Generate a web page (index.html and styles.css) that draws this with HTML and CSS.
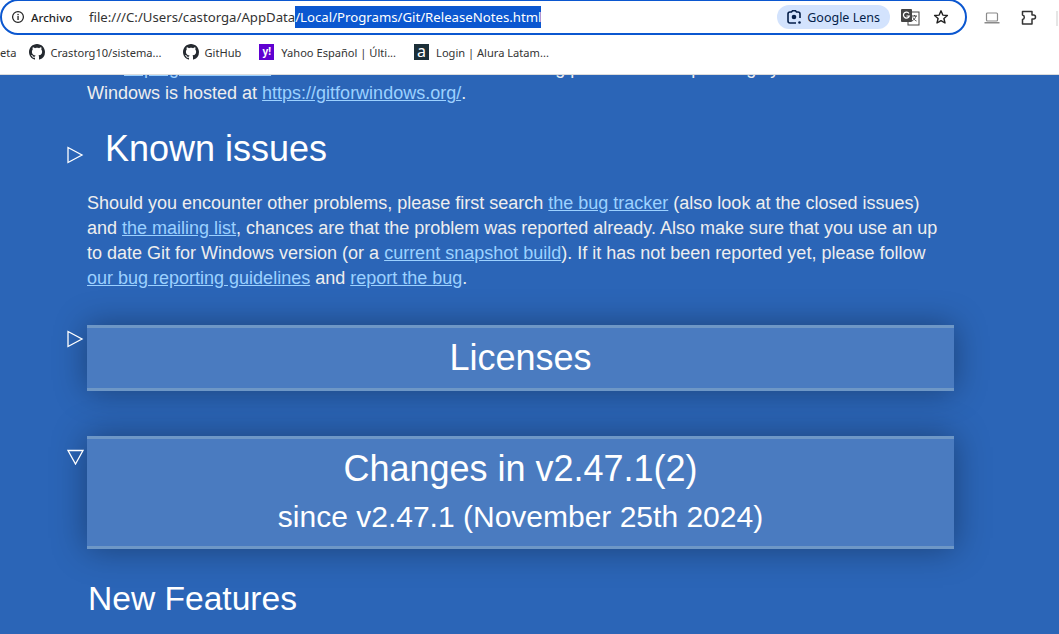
FILE: index.html
```html
<!doctype html>
<html lang="es">
<head>
  <meta charset="utf-8">
  <title>ReleaseNotes</title>
  <link rel="stylesheet" href="styles.css">
</head>
<body>
  <header class="chrome">
    <div class="toolbar">
      <div class="omnibox">
        <svg class="info-icon" width="14" height="14" viewBox="0 0 14 14"><circle cx="7" cy="7" r="5.400" fill="none" stroke="#1f1f1f" stroke-width="1.200"/><rect x="6.400" y="6" width="1.300" height="4" fill="#1f1f1f"/><rect x="6.400" y="3.900" width="1.300" height="1.300" fill="#1f1f1f"/></svg>
        <span class="scheme">Archivo</span>
        <span class="url">file:///C:/Users/castorga/AppData<span class="selected">/Local/Programs/Git/ReleaseNotes.html</span></span>
        <span class="lens">
          <svg width="16" height="16" viewBox="0 0 16 16"><path d="M2 10V5a2 2 0 0 1 2-2h1.500l1-1.200h3l1 1.200H12a2 2 0 0 1 2 2v4M10 14H4a2 2 0 0 1-2-2v-2" fill="none" stroke="#041e49" stroke-width="1.600"/><circle cx="8" cy="8" r="2.300" fill="#041e49"/><circle cx="13.500" cy="13.500" r="1.300" fill="#041e49"/></svg>
          Google Lens
        </span>
        <svg class="translate" width="20" height="18" viewBox="0 0 20 18"><rect x="8" y="4" width="11" height="13" fill="#fff" stroke="#444" stroke-width="1"/><rect x="1" y="1" width="11" height="13" rx="1" fill="#444"/><path d="M9 5.500A3 3 0 1 0 9.300 8H6.500" fill="none" stroke="#fff" stroke-width="1.200"/><path d="M12 8h5M14.500 7v1M16 8c-.5 2-2 4-4 5M13 9.500c.7 1.500 2 3 3.500 3.500" fill="none" stroke="#444"/></svg>
        <svg class="star" width="16" height="16" viewBox="0 0 16 16"><path d="M8 1.800l1.800 4.300 4.600.4-3.500 3 1.100 4.500L8 11.600 4 14l1.100-4.500-3.500-3 4.600-.4z" fill="none" stroke="#1f1f1f" stroke-width="1.400" stroke-linejoin="round"/></svg>
      </div>
      <svg class="laptop" width="16" height="12" viewBox="0 0 16 12"><rect x="2.500" y="1" width="11" height="8" rx="1" fill="none" stroke="#8a8a8a" stroke-width="1.200"/><rect x="0.500" y="10" width="15" height="1.500" fill="#8a8a8a"/></svg>
      <svg class="puzzle" width="18" height="18" viewBox="0 0 18 18"><path d="M2.500 2.500H12V6h1.500a2 2 0 0 1 0 4H12v5H2.500v-4.500a2.300 2.300 0 0 0 0-4.500z" fill="none" stroke="#333" stroke-width="1.500" stroke-linejoin="round"/></svg>
      <span class="toolbar-sep"></span>
    </div>
    <nav class="bookmarks">
      <span class="bm bm-cut">eta</span>
      <span class="bm bm-repo">
        <svg class="gh" width="16" height="16" viewBox="0 0 16 16"><path fill="#24292f" d="M8 0C3.580 0 0 3.580 0 8c0 3.540 2.290 6.530 5.470 7.590.4.070.55-.17.550-.38 0-.19-.01-.82-.01-1.490-2.010.37-2.530-.49-2.690-.94-.09-.23-.48-.94-.82-1.130-.28-.15-.68-.52-.01-.53.630-.01 1.080.58 1.230.82.720 1.210 1.870.87 2.330.66.070-.52.280-.87.510-1.070-1.780-.2-3.640-.89-3.640-3.950 0-.87.310-1.590.820-2.150-.08-.2-.36-1.020.08-2.120 0 0 .67-.21 2.200.82.640-.18 1.320-.27 2-.27s1.360.09 2 .27c1.530-1.040 2.200-.82 2.200-.82.440 1.100.16 1.920.08 2.120.510.560.820 1.270.820 2.150 0 3.070-1.870 3.750-3.650 3.950.290.250.540.730.540 1.480 0 1.070-.01 1.930-.01 2.200 0 .210.150.460.550.380A8.010 8.010 0 0 0 16 8c0-4.420-3.580-8-8-8z"/></svg>
        Crastorg10/sistema...
      </span>
      <span class="bm bm-github">
        <svg class="gh" width="16" height="16" viewBox="0 0 16 16"><path fill="#24292f" d="M8 0C3.580 0 0 3.580 0 8c0 3.540 2.290 6.530 5.470 7.590.4.070.55-.17.550-.38 0-.19-.01-.82-.01-1.490-2.010.37-2.530-.49-2.690-.94-.09-.23-.48-.94-.82-1.130-.28-.15-.68-.52-.01-.53.630-.01 1.080.58 1.230.82.720 1.210 1.870.87 2.330.66.070-.52.280-.87.510-1.070-1.780-.2-3.640-.89-3.640-3.950 0-.87.310-1.590.820-2.150-.08-.2-.36-1.020.08-2.120 0 0 .67-.21 2.200.82.640-.18 1.320-.27 2-.27s1.360.09 2 .27c1.530-1.040 2.200-.82 2.200-.82.440 1.100.16 1.920.08 2.120.510.560.820 1.270.820 2.150 0 3.070-1.870 3.750-3.650 3.950.290.250.540.730.540 1.480 0 1.070-.01 1.930-.01 2.200 0 .210.150.460.550.380A8.010 8.010 0 0 0 16 8c0-4.420-3.580-8-8-8z"/></svg>
        GitHub
      </span>
      <span class="bm bm-yahoo">
        <span class="favicon yahoo">y!</span>
        Yahoo Español | Últi...
      </span>
      <span class="bm bm-alura">
        <span class="favicon alura">a</span>
        Login | Alura Latam...
      </span>
    </nav>
  </header>

  <div class="viewport">
  <main class="page">
    <p>See <a href="#">http://git-scm.com/</a> for further details about Git including ports to other operating systems. Git for Windows is hosted at <a href="#">https://gitforwindows.org/</a>.</p>

    <section class="known">
      <svg class="toggle toggle-known" width="17" height="18" viewBox="0 0 17 18"><polygon points="1,1.500 15,9 1,16.500" fill="none" stroke="#fff" stroke-width="1.300"/></svg>
      <h2 class="known-title">Known issues</h2>
      <p>Should you encounter other problems, please first search <a href="#">the bug tracker</a> (also look at the closed issues) and <a href="#">the mailing list</a>, chances are that the problem was reported already. Also make sure that you use an up to date Git for Windows version (or a <a href="#">current snapshot build</a>). If it has not been reported yet, please follow <a href="#">our bug reporting guidelines</a> and <a href="#">report the bug</a>.</p>
    </section>

    <section class="banner banner-licenses">
      <svg class="toggle toggle-banner" width="17" height="18" viewBox="0 0 17 18"><polygon points="1,1.500 15,9 1,16.500" fill="none" stroke="#fff" stroke-width="1.300"/></svg>
      <h1>Licenses</h1>
    </section>

    <section class="banner banner-changes">
      <svg class="toggle toggle-open" width="18" height="16" viewBox="0 0 18 16"><polygon points="1,1.500 16,1.500 8.500,15" fill="none" stroke="#fff" stroke-width="1.300"/></svg>
      <h1>Changes in v2.47.1(2)</h1>
      <h3>since v2.47.1 (November 25th 2024)</h3>
    </section>

    <h2 class="features">New Features</h2>
  </main>
  </div>
</body>
</html>
```

FILE: styles.css
```css
html, body {
    margin: 0;
    height: 634px;
    overflow: hidden;
}
body {
    background: #2b65b7;
    font-family: "Liberation Sans", Arial, sans-serif;
}

/* browser chrome */
.chrome {
    position: relative;
    z-index: 2;
    height: 75px;
    box-sizing: border-box;
    background: #fff;
    border-bottom: 1px solid #dcdcdc;
    font-family: "Noto Sans", sans-serif;
    color: #1f1f1f;
}
.toolbar {
    display: flex;
    align-items: center;
    height: 36px;
}
.omnibox {
    display: flex;
    align-items: center;
    box-sizing: border-box;
    width: 967px;
    height: 36px;
    margin-top: -2px;
    padding: 0 16px 0 9px;
    border: 2px solid #0b57d0;
    border-radius: 18px;
}
.info-icon {
    flex: none;
}
.scheme {
    margin-left: 6px;
    width: 58px;
    font-size: 11.500px;
    font-weight: 500;
}
.url {
    font-size: 13.200px;
    flex: 1;
    white-space: nowrap;
    color: #333;
}
.selected {
    display: inline-block;
    background: #0b57d0;
    color: #fff;
    line-height: 22px;
}
.lens {
    display: flex;
    align-items: center;
    gap: 5px;
    height: 24px;
    padding: 0 10px 0 9px;
    border-radius: 12px;
    background: #d3e3fd;
    color: #041e49;
    font-size: 12.500px;
}
.translate {
    margin-left: 10px;
}
.star {
    margin-left: 13px;
}
.laptop {
    margin-left: 17px;
}
.puzzle {
    margin-left: 20px;
}
.toolbar-sep {
    width: 2px;
    height: 15px;
    margin-left: 18px;
    background: #e6e6e6;
}
.bookmarks {
    display: flex;
    align-items: center;
    height: 32px;
    font-size: 11.100px;
    color: #333;
    white-space: nowrap;
    overflow: hidden;
}
.bm {
    display: flex;
    align-items: center;
    gap: 6px;
    margin-right: 18px;
}
.bm-cut {
    margin-right: 12px;
}
.bm-repo {
    margin-right: 21px;
}
.bm-github {
    margin-right: 18px;
}
.bm-yahoo, .bm-alura {
    gap: 7px;
}
.favicon {
    display: inline-block;
    width: 15px;
    height: 16px;
    line-height: 15px;
    text-align: center;
    color: #fff;
    font-weight: bold;
}
.yahoo {
    background: #5f01d1;
    font-size: 10px;
}
.alura {
    background: #1c2f38;
    font-size: 16px;
    font-weight: normal;
}

/* release notes */
.viewport {
    height: 559px;
    overflow: hidden;
}
.page {
    position: relative;
    margin-top: -19px;
    padding-left: 87px;
    width: 867px;
    font-size: 18px;
    line-height: 25px;
    color: #eee;
}
.page p {
    margin: 0;
}
.page a {
    color: #9cd1ff;
}
.known {
    position: relative;
    margin-top: 22px;
}
.known-title {
    margin: 0 0 22px 18px;
    font-size: 36px;
    line-height: 41px;
    font-weight: normal;
    color: #fff;
}
.toggle {
    position: absolute;
    left: -20px;
}
.toggle-known {
    top: 18px;
}
.toggle-banner {
    top: 2px;
}
.toggle-open {
    top: 10px;
}
.banner {
    position: relative;
    border-top: 3px solid #6e97c6;
    border-bottom: 3px solid #6e97c6;
    background: #4a7bc0;
    box-shadow: 0 0 32px rgba(0, 0, 0, .35);
    text-align: center;
    color: #fff;
}
.banner h1 {
    margin: 0;
    font-size: 36px;
    font-weight: normal;
    line-height: 60px;
}
.banner h3 {
    margin: -3px 0 8px;
    font-size: 30px;
    font-weight: normal;
    line-height: 42px;
}
.banner-licenses {
    margin-top: 34px;
}
.banner-changes {
    margin-top: 45px;
}
.features {
    margin: 30px 0 0 1px;
    font-size: 33.600px;
    line-height: 40px;
    font-weight: normal;
    color: #fff;
}
```
